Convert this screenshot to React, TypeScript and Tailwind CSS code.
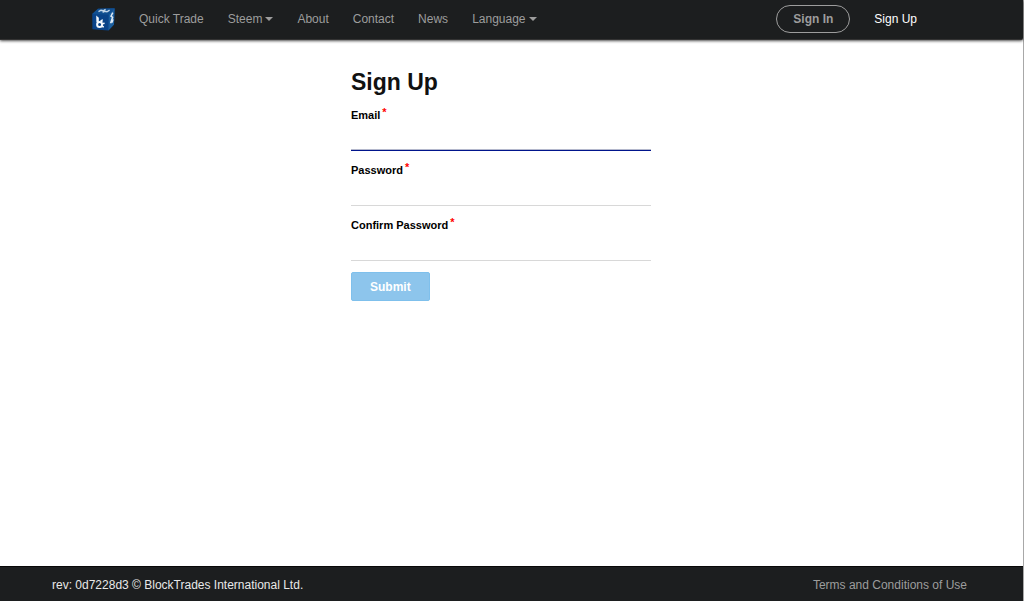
import { clsx } from 'clsx'
import { useState } from 'react'

type NavItem = {
  label: string
  href: string
  menu?: boolean
}

const navItems: NavItem[] = [
  { label: 'Quick Trade', href: '#trade' },
  { label: 'Steem', href: '#steem', menu: true },
  { label: 'About', href: '#about' },
  { label: 'Contact', href: '#contact' },
  { label: 'News', href: '#news' },
  { label: 'Language', href: '#language', menu: true },
]

function Logo() {
  return (
    <svg viewBox="0 0 24 24" className="h-6 w-6" aria-hidden>
      <path d="M1.2 7 7 1.8 23.6 1.2 23 17.5 17.4 23.6 1.4 22.2Z" fill="#0a4388" />
      <path d="M1.2 7 7 1.8 23.6 1.2 17.8 7.8Z" fill="#114f90" />
      <path d="M17.8 7.8 23.6 1.2 23 17.5 17.4 23.6Z" fill="#1c5f9f" />
      <path d="M7.5 4.6 10 3.2 12.2 3.8 14.6 2.4M11.6 5.4 13.8 4.2 16 4.8 18.6 3.2" fill="none" stroke="#c3d6e8" strokeWidth="1.4" />
      <path d="M21.8 5.6 20 9.2 21.6 10.2 19.6 16.2M22 12.4 21 15.6" fill="none" stroke="#dfeaf4" strokeWidth="1.5" />
      <path d="M5.2 8.6 7.8 10.8 7.8 15 5.4 15.2Z" fill="#f4f8fc" />
      <path d="M9.2 13.4 11.6 12 11.8 14.4 10 15.4Z" fill="#f4f8fc" />
      <circle cx="8.6" cy="17.4" r="2.5" fill="none" stroke="#f4f8fc" strokeWidth="2" />
      <path d="M11 16.8 13.6 16.2M10.6 19 12.8 20" stroke="#f4f8fc" strokeWidth="1.5" />
    </svg>
  )
}

function Caret() {
  return (
    <svg viewBox="0 0 8 4" className="mt-px ml-[3px] h-1 w-2" aria-hidden>
      <path d="M0 0H8L4 4Z" fill="currentColor" />
    </svg>
  )
}

type FieldProps = {
  id: string
  label: string
  type: string
  value: string
  active: boolean
  onChange: (value: string) => void
  onFocus: () => void
}

function Field({ id, label, type, value, active, onChange, onFocus }: FieldProps) {
  return (
    <div className="mb-[11px]">
      <label htmlFor={id} className="flex h-4 items-center text-[11px] font-bold text-black">
        {label}
        <span className="mb-1.5 ml-0.5 text-[#f00]" aria-hidden>
          *
        </span>
      </label>
      <input
        id={id}
        type={type}
        value={value}
        required
        onChange={(event) => onChange(event.target.value)}
        onFocus={onFocus}
        className={clsx(
          'block h-7 w-full border-b bg-transparent text-xs outline-none',
          active ? 'border-[#00148c] shadow-[inset_0_-1px_0_#b4b8cc]' : 'border-[#d8d8d8]',
        )}
      />
    </div>
  )
}

const fields = [
  { id: 'email', label: 'Email', type: 'email' },
  { id: 'password', label: 'Password', type: 'password' },
  { id: 'confirm', label: 'Confirm Password', type: 'password' },
]

export default function App() {
  const [values, setValues] = useState<Record<string, string>>({})
  const [active, setActive] = useState('email')

  return (
    <div className="flex min-h-screen flex-col border-r border-[#a8a8a8] bg-white font-['Liberation_Sans',Arial,sans-serif] text-xs text-[#9d9d9d]">
      <header className="flex h-10 items-center justify-between rounded-br-xs border-b border-[#333] bg-[#1c1e1f] pr-[106px] pb-0.5 pl-[91px] shadow-[0_1px_3px_rgba(0,0,0,0.7)]">
        <nav className="flex items-center gap-6" aria-label="Main">
          <a href="#home" aria-label="BlockTrades home">
            <Logo />
          </a>
          {navItems.map((item) => (
            <a key={item.label} href={item.href} className="flex items-center whitespace-nowrap hover:text-white">
              {item.label}
              {item.menu ? <Caret /> : null}
            </a>
          ))}
        </nav>
        <div className="flex items-center gap-6">
          <a
            href="#signin"
            className="flex h-7 items-center rounded-full border border-[#9d9d9d] px-4 font-bold whitespace-nowrap"
          >
            Sign In
          </a>
          <a href="#signup" className="whitespace-nowrap text-white">
            Sign Up
          </a>
        </div>
      </header>

      <main className="flex-1 pt-7 pr-[21px]">
        <form className="mx-auto w-full max-w-[300px]" onSubmit={(event) => event.preventDefault()}>
          <h1 className="mb-[11px] text-[23px] leading-7 font-bold text-[#111]">Sign Up</h1>
          {fields.map((field) => (
            <Field
              key={field.id}
              {...field}
              value={values[field.id] ?? ''}
              active={active === field.id}
              onChange={(value) => setValues({ ...values, [field.id]: value })}
              onFocus={() => setActive(field.id)}
            />
          ))}
          <button
            type="submit"
            className="h-[29px] rounded-xs border border-[#7fc0ec] bg-[#8dc5ec] px-[18px] font-bold text-white"
          >
            Submit
          </button>
        </form>
      </main>

      <footer className="flex h-[35px] items-center justify-between border-t border-[#080808] bg-[#1c1e1f] pt-0.5 pr-14 pl-[52px]">
        <span className="text-[#e8e8e8]">rev: 0d7228d3 © BlockTrades International Ltd.</span>
        <a href="#terms" className="hover:text-white">
          Terms and Conditions of Use
        </a>
      </footer>
    </div>
  )
}
